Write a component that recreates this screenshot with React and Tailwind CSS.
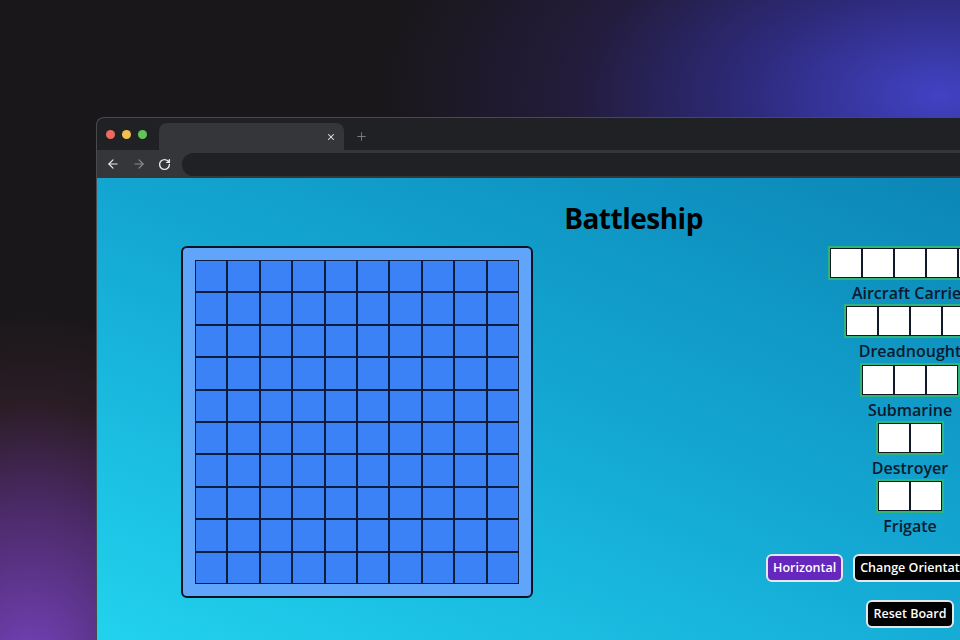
import { ArrowLeft, ArrowRight, RotateCw, X, Plus } from 'lucide-react';

const ships = [
  { name: 'Aircraft Carrier', size: 5 },
  { name: 'Dreadnought', size: 4 },
  { name: 'Submarine', size: 3 },
  { name: 'Destroyer', size: 2 },
  { name: 'Frigate', size: 2 },
];

function Board() {
  const cells = Array.from({ length: 100 });
  return (
    <div className="w-[352px] h-[352px] rounded-[6px] border-2 border-[#0b1220] bg-[#60a5fa] p-3 shrink-0">
      <div className="grid grid-cols-10 w-[324px] h-[324px]">
        {cells.map((_, i) => (
          <div key={i} className="bg-[#3b82f6] border border-[#0c1d3d]" />
        ))}
      </div>
    </div>
  );
}

function Ship({ name, size }) {
  return (
    <div className="flex flex-col items-center">
      <div className="flex border-2 border-[#2fb47a]">
        {Array.from({ length: size }).map((_, i) => (
          <div key={i} className="w-8 h-[30px] bg-white border border-[#111827]" />
        ))}
      </div>
      <div className="h-[24.3px] pt-[1px] leading-6 text-base font-semibold text-[#0b1a2e] whitespace-nowrap">{name}</div>
    </div>
  );
}

export default function App() {
  return (
    <div
      className="w-[960px] h-[640px] overflow-hidden bg-[#19171a] bg-[radial-gradient(ellipse_560px_300px_at_940px_95px,#4242c4_0%,#2d2a7a_35%,#231c3c_65%,transparent_100%),radial-gradient(ellipse_280px_360px_at_30px_670px,#7442bc_0%,#4c2a68_45%,#2a1c24_75%,transparent_100%)]"
      style={{ fontFamily: '"Open Sans", "Noto Sans", sans-serif' }}
    >
      <div className="pl-[96px] pt-[117px]">
        <div className="w-[1074px] rounded-tl-[8px] border-l border-t border-[#4a4a4e] overflow-hidden bg-[#202124]">
          {/* title bar */}
          <div className="h-[32px] flex items-end">
            <div className="flex items-center gap-[7px] pl-[9px] h-[32px]">
              <span className="w-[9px] h-[9px] rounded-full bg-[#ed6a5e]" />
              <span className="w-[9px] h-[9px] rounded-full bg-[#f4bf4f]" />
              <span className="w-[9px] h-[9px] rounded-full bg-[#61c554]" />
            </div>
            <div className="ml-[12px] w-[185px] h-[27px] bg-[#35363a] rounded-t-[8px] flex items-center justify-end pr-[8px]">
              <X className="w-[10px] h-[10px] text-[#e8eaed]" strokeWidth={2.5} />
            </div>
            <div className="h-[27px] flex items-center ml-[11px]">
              <Plus className="w-[13px] h-[13px] text-[#8a8b8f]" strokeWidth={1.5} />
            </div>
          </div>
          {/* toolbar */}
          <div className="h-[28px] bg-[#35363a] flex items-center">
            <div className="flex items-center gap-[12px] pl-[9px]">
              <ArrowLeft className="w-[14px] h-[14px] text-[#e8eaed]" strokeWidth={2} />
              <ArrowRight className="w-[14px] h-[14px] text-[#8a8b8f]" strokeWidth={2} />
              <RotateCw className="w-[13px] h-[13px] text-[#e8eaed]" strokeWidth={2.5} />
            </div>
            <div className="ml-[11px] flex-1 h-[23px] rounded-full bg-[#202124]" />
          </div>
          {/* page */}
          <div className="h-[470px] bg-[linear-gradient(to_top_right,#22d3ee_0%,#14a9d4_45%,#0a7fb0_100%)]">
            <h1 className="text-center text-[28px] leading-9 font-bold tracking-[-0.5px] text-black pt-[22px]">Battleship</h1>
            <div className="flex items-start mt-[10px]">
              <div className="ml-[84px]">
                <Board />
              </div>
              <div className="ml-[227px] w-[300px] flex flex-col items-center">
                {ships.map((s) => (
                  <Ship key={s.name} name={s.name} size={s.size} />
                ))}
                <div className="w-full flex gap-[10px] pl-[6px] mt-[17px]">
                  <button className="h-[28px] px-[5px] rounded-md border-2 border-[#e5e7eb] bg-[#6527be] text-white text-[12.5px] font-semibold whitespace-nowrap">
                    Horizontal
                  </button>
                  <button className="h-[28px] px-[5px] rounded-md border-2 border-[#e5e7eb] bg-black text-white text-[12.5px] font-semibold whitespace-nowrap">
                    Change Orientation
                  </button>
                </div>
                <button className="mt-[18px] h-[28px] px-[6px] rounded-md border-2 border-[#e5e7eb] bg-black text-white text-[12.5px] font-semibold whitespace-nowrap">
                  Reset Board
                </button>
              </div>
            </div>
          </div>
        </div>
      </div>
    </div>
  );
}
